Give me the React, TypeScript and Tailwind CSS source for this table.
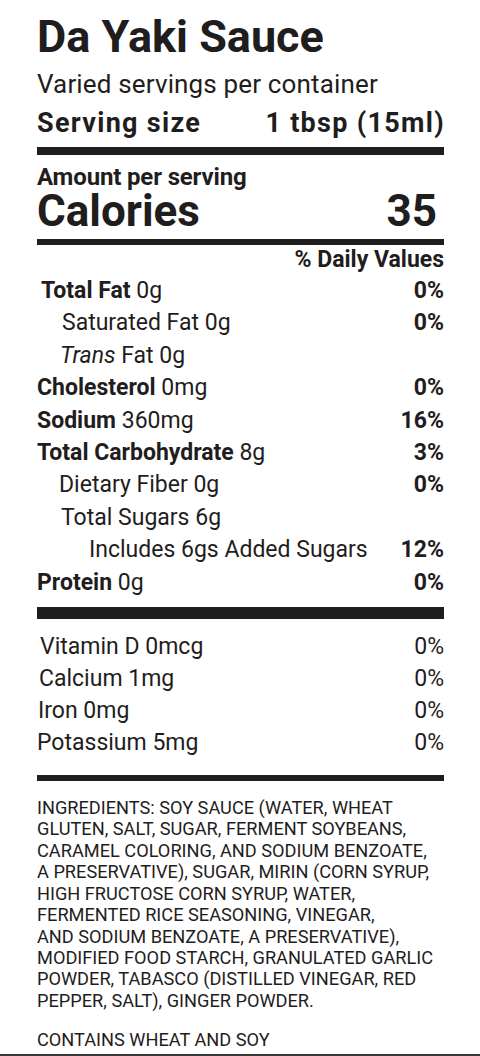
const ink = "text-[#1f1d1d]";

type Row = {
  label: string;
  amount: string;
  dv?: string;
  bold?: boolean;
  italicPrefix?: string;
  indent: string;
};

const rows: Row[] = [
  { label: "Total Fat", amount: "0g", dv: "0%", bold: true, indent: "pl-[4px]" },
  { label: "Saturated Fat", amount: "0g", dv: "0%", indent: "pl-[25px]" },
  { label: "Fat", italicPrefix: "Trans", amount: "0g", indent: "pl-[23px]" },
  { label: "Cholesterol", amount: "0mg", dv: "0%", bold: true, indent: "pl-0" },
  { label: "Sodium", amount: "360mg", dv: "16%", bold: true, indent: "pl-0" },
  { label: "Total Carbohydrate", amount: "8g", dv: "3%", bold: true, indent: "pl-0" },
  { label: "Dietary Fiber", amount: "0g", dv: "0%", indent: "pl-[22px]" },
  { label: "Total Sugars", amount: "6g", indent: "pl-[24px]" },
  { label: "Includes 6gs Added Sugars", amount: "", dv: "12%", indent: "pl-[52px]" },
  { label: "Protein", amount: "0g", dv: "0%", bold: true, indent: "pl-0" },
];

const vitamins = [
  { label: "Vitamin D 0mcg", dv: "0%", indent: "pl-[3px]" },
  { label: "Calcium 1mg", dv: "0%", indent: "pl-[2px]" },
  { label: "Iron 0mg", dv: "0%", indent: "pl-[1px]" },
  { label: "Potassium 5mg", dv: "0%", indent: "pl-0" },
];

const ingredients = [
  "INGREDIENTS: SOY SAUCE (WATER, WHEAT",
  "GLUTEN, SALT, SUGAR, FERMENT SOYBEANS,",
  "CARAMEL COLORING, AND SODIUM BENZOATE,",
  "A PRESERVATIVE), SUGAR, MIRIN (CORN SYRUP,",
  "HIGH FRUCTOSE CORN SYRUP, WATER,",
  "FERMENTED RICE SEASONING, VINEGAR,",
  "AND SODIUM BENZOATE, A PRESERVATIVE),",
  "MODIFIED FOOD STARCH, GRANULATED GARLIC",
  "POWDER, TABASCO (DISTILLED VINEGAR, RED",
  "PEPPER, SALT), GINGER POWDER.",
];

export default function App() {
  return (
    <div
      className={`w-[480px] h-[1056px] bg-white ${ink} flex flex-col overflow-hidden`}
      style={{ fontFamily: "Roboto, 'Liberation Sans', sans-serif" }}
    >
      <div className="flex flex-col pl-[37px] pr-[36px] pt-[13px] flex-1">
        <h1 className="text-[45px] leading-[48px] font-bold">Da Yaki Sauce</h1>
        <p className="text-[26px] leading-[32px] mt-[7px] tracking-[0.15px]">Varied servings per container</p>
        <div className="flex justify-between text-[27px] leading-[32px] font-bold tracking-[1.3px] mt-[7px]">
          <span>Serving size</span>
          <span className="mr-[-1px]">1 tbsp (15ml)</span>
        </div>
        <div className="h-[8px] bg-[#1f1d1d] mt-[8px]" />

        <p className="text-[24px] leading-[24px] font-bold mt-[10px] tracking-[-0.15px]">Amount per serving</p>
        <div className="flex justify-between items-baseline text-[44px] leading-[44px] font-bold">
          <span>Calories</span>
          <span className="pr-[7px]">35</span>
        </div>
        <div className="h-[6px] bg-[#1f1d1d] mt-[6px]" />

        <p className="text-[23px] leading-[24px] font-bold text-right mt-[3px]">% Daily Values</p>

        <div className="flex flex-col mt-[3px]">
          {rows.map((r) => (
            <div key={r.label} className="flex justify-between text-[23px] leading-[32.4px]">
              <span className={r.indent}>
                {r.italicPrefix && <em>{r.italicPrefix} </em>}
                <span className={r.bold ? "font-bold" : ""}>{r.label}</span>
                {r.amount && <> {r.amount}</>}
              </span>
              <span className="font-bold">{r.dv ?? ""}</span>
            </div>
          ))}
        </div>
        <div className="h-[12px] bg-[#1f1d1d] mt-[8px]" />

        <div className="flex flex-col mt-[12px]">
          {vitamins.map((v) => (
            <div key={v.label} className="flex justify-between text-[23px] leading-[32px]">
              <span className={v.indent}>{v.label}</span>
              <span>{v.dv}</span>
            </div>
          ))}
        </div>
        <div className="h-[6px] bg-[#1f1d1d] mt-[16px]" />

        <div className="text-[18.2px] leading-[21.4px] mt-[16px]">
          {ingredients.map((line) => (
            <div key={line}>{line}</div>
          ))}
          <div className="mt-[18px]">CONTAINS WHEAT AND SOY</div>
        </div>
      </div>
      <div className="h-[2px] bg-[#3a3a3a]" />
    </div>
  );
}
